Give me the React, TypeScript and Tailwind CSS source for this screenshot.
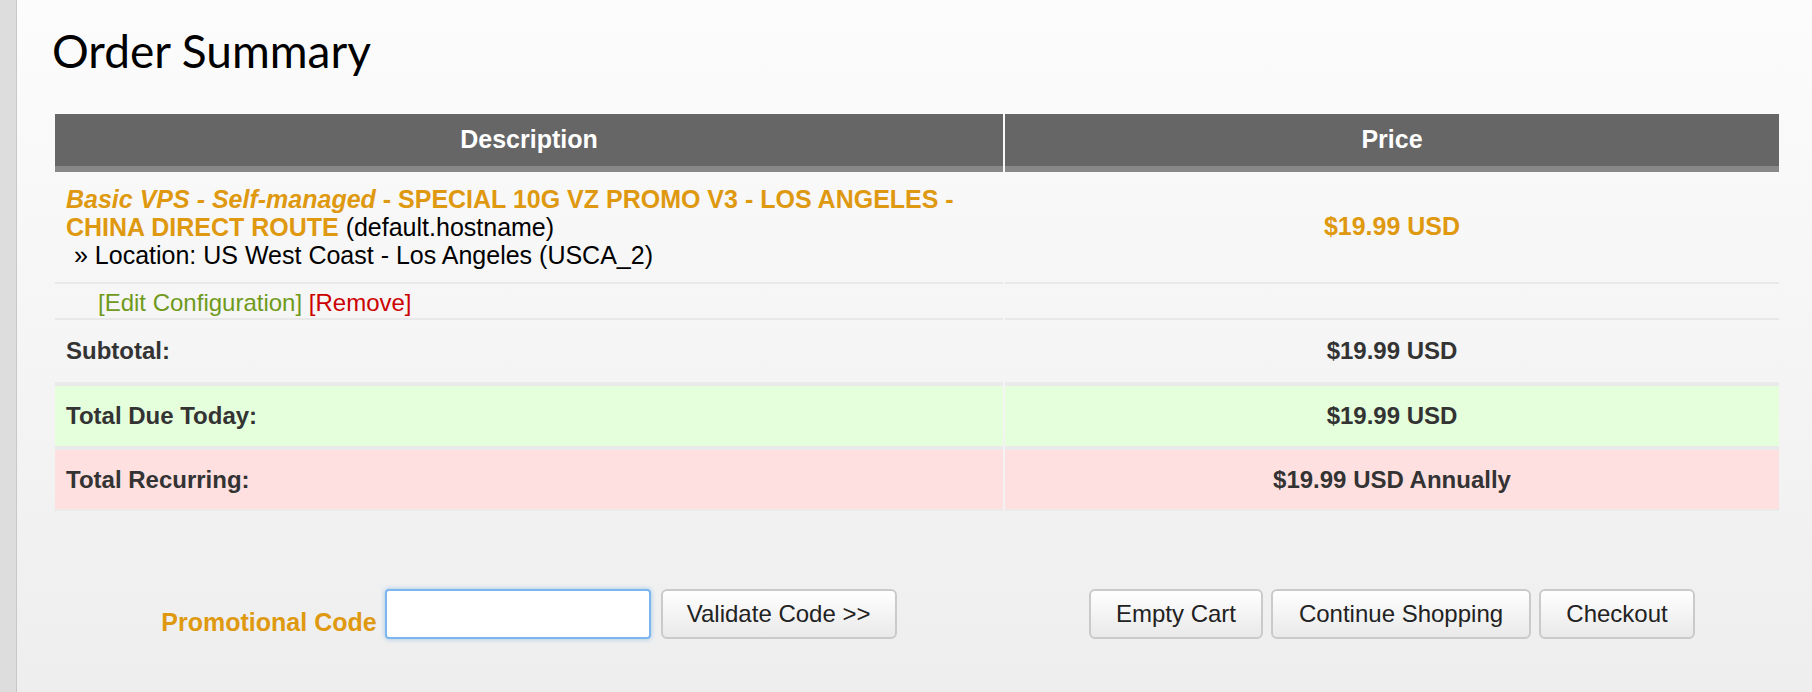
import React from "react";

function Btn({ w, children }: { w: string; children: React.ReactNode }) {
  return (
    <button
      type="button"
      className={`${w} h-[50px] shrink-0 rounded-[6px] border-2 border-[#cacaca] bg-linear-to-b from-white to-[#e9e9e9] text-[24px] leading-none text-[#222222]`}
    >
      {children}
    </button>
  );
}

export default function App() {
  return (
    <div className="flex h-[692px] w-[1812px] overflow-hidden font-['Liberation_Sans',Arial,sans-serif]">
      <div className="w-[17px] shrink-0 border-r border-[#c8c8c8] bg-[#dddddd]" />
      <main className="flex-1 bg-linear-to-b from-[#fcfcfc] to-[#eeeeee] pl-[38px] pr-[32px]">
        <h1 className="-ml-[3px] pt-[28px] font-['Lato',sans-serif] text-[46px] font-normal leading-none text-black">
          Order Summary
        </h1>

        <div className="mt-[40px] w-[1724px]">
          {/* header */}
          <div className="flex gap-[2px]">
            <div className="flex h-[58px] w-[948px] items-center justify-center border-b-[6px] border-[#888888] bg-[#666666] text-[25px] font-bold text-white">
              Description
            </div>
            <div className="flex h-[58px] w-[774px] items-center justify-center border-b-[6px] border-[#888888] bg-[#666666] text-[25px] font-bold text-white">
              Price
            </div>
          </div>

          {/* product */}
          <div className="flex gap-[2px]">
            <div className="h-[112px] w-[948px] border-b-2 border-[#e8e8e8] py-[13px] pl-[11px] text-[25px] leading-[28px] text-black">
              <span className="font-bold text-[#df9910]">
                <i>Basic VPS - Self-managed</i> - SPECIAL 10G VZ PROMO V3 - LOS ANGELES - CHINA DIRECT ROUTE
              </span>{" "}
              (default.hostname)
              <div className="pl-[8px]">» Location: US West Coast - Los Angeles (USCA_2)</div>
            </div>
            <div className="flex h-[112px] w-[774px] items-center justify-center border-b-2 border-[#e8e8e8] text-[25px] font-bold text-[#df9910]">
              $19.99 USD
            </div>
          </div>

          {/* edit row */}
          <div className="flex gap-[2px]">
            <div className="h-[36px] w-[948px] border-b-2 border-[#e8e8e8] pt-[5px] pl-[43px] text-[24px] leading-[28px]">
              <span className="text-[#6f9a1b]">[Edit Configuration]</span>{" "}
              <span className="text-[#cc0000]">[Remove]</span>
            </div>
            <div className="h-[36px] w-[774px] border-b-2 border-[#e8e8e8]" />
          </div>

          {/* subtotal */}
          <div className="flex gap-[2px] text-[24px] font-bold text-[#333333]">
            <div className="flex h-[66px] w-[948px] items-center border-b-4 border-[#eaeaea] pb-[1px] pl-[11px]">
              Subtotal:
            </div>
            <div className="flex h-[66px] w-[774px] items-center justify-center border-b-4 border-[#eaeaea] pb-[1px]">
              $19.99 USD
            </div>
          </div>

          {/* total due */}
          <div className="flex gap-[2px] text-[24px] font-bold text-[#333333]">
            <div className="flex h-[64px] w-[948px] items-center border-b-4 border-[#eaeaea] bg-[#e5fedb] bg-clip-padding pl-[11px]">
              Total Due Today:
            </div>
            <div className="flex h-[64px] w-[774px] items-center justify-center border-b-4 border-[#eaeaea] bg-[#e5fedb] bg-clip-padding">
              $19.99 USD
            </div>
          </div>

          {/* recurring */}
          <div className="flex gap-[2px] text-[24px] font-bold text-[#333333]">
            <div className="flex h-[61px] w-[948px] items-center border-b-2 border-[#eaeaea] bg-[#ffe0e0] bg-clip-padding pl-[11px]">
              Total Recurring:
            </div>
            <div className="flex h-[61px] w-[774px] items-center justify-center border-b-2 border-[#eaeaea] bg-[#ffe0e0] bg-clip-padding">
              $19.99 USD Annually
            </div>
          </div>
        </div>

        {/* bottom actions */}
        <div className="mt-[78px] flex w-[1724px] gap-[2px]">
          <div className="flex w-[948px] items-end justify-center">
            <span className="pb-[5px] text-[25px] font-bold leading-[24px] text-[#df9910]">Promotional Code</span>
            <input
              type="text"
              className="ml-[8px] h-[50px] w-[266px] rounded-[4px] border-2 border-[#7db6ec] bg-white shadow-[0_0_5px_rgba(90,160,230,0.55)] outline-none"
            />
            <div className="ml-[10px]">
              <Btn w="w-[236px]">Validate Code &gt;&gt;</Btn>
            </div>
          </div>
          <div className="flex w-[774px] items-end justify-center gap-[8px]">
            <Btn w="w-[174px]">Empty Cart</Btn>
            <Btn w="w-[260px]">Continue Shopping</Btn>
            <Btn w="w-[156px]">Checkout</Btn>
          </div>
        </div>
      </main>
    </div>
  );
}
